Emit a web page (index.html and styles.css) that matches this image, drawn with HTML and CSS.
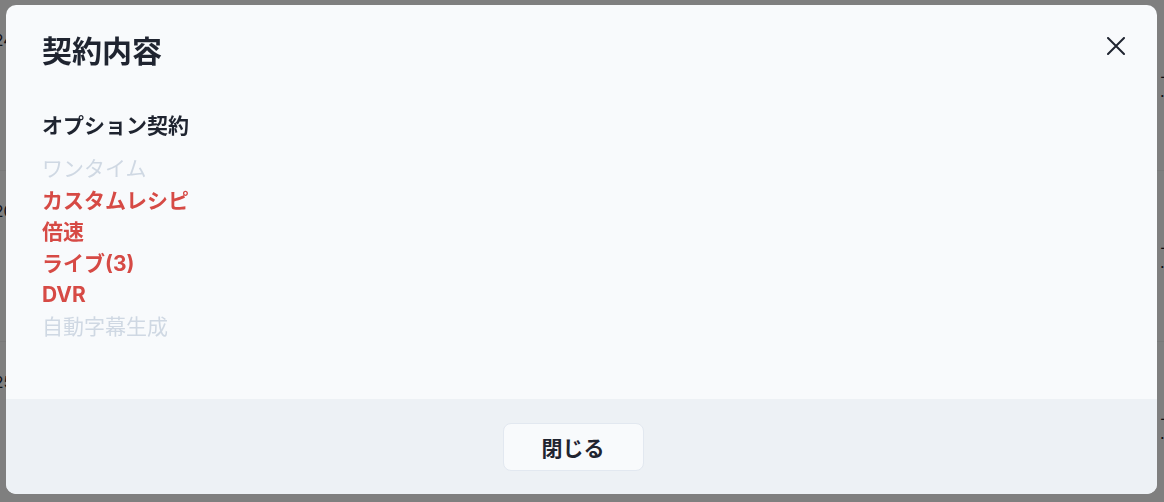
FILE: index.html
```html
<!DOCTYPE html>
<html lang="ja">
<head>
    <meta charset="UTF-8">
    <meta name="viewport" content="width=device-width, initial-scale=1.0">
    <title>契約内容</title>
    <link rel="stylesheet" href="styles.css">
</head>
<body>

    <!-- 背後の一覧 -->
    <div class="page" aria-hidden="true">
        <div class="row">
            <div class="cell-left"><span>2024</span><span>1.5</span></div>
            <div class="cell-right"><span>-</span><span>·</span></div>
        </div>
        <div class="row">
            <div class="cell-left"><span>2020</span><span>1.5</span></div>
            <div class="cell-right"><span>-</span><span>·</span></div>
        </div>
        <div class="row">
            <div class="cell-left"><span>2025</span><span>1.5</span><span>-:</span></div>
            <div class="cell-right"><span>-</span><span>·</span></div>
        </div>
    </div>

    <div class="overlay">
        <div class="modal">
            <div class="modal-body">
                <h2 class="modal-title">契約内容</h2>
                <button class="close-btn" aria-label="閉じる">
                    <svg width="18" height="18" viewBox="0 0 18 18">
                        <path d="M1 1 L17 17 M17 1 L1 17" stroke="#1f2430" stroke-width="2" stroke-linecap="round" fill="none"/>
                    </svg>
                </button>

                <h3 class="section-title">オプション契約</h3>
                <ul class="options">
                    <li class="off">ワンタイム</li>
                    <li class="on">カスタムレシピ</li>
                    <li class="on">倍速</li>
                    <li class="on">ライブ(3)</li>
                    <li class="on">DVR</li>
                    <li class="off">自動字幕生成</li>
                </ul>
            </div>
            <div class="modal-footer">
                <button class="footer-btn">閉じる</button>
            </div>
        </div>
    </div>

</body>
</html>
```

FILE: styles.css
```css
body {
    margin: 0;
    font-family: Inter, "Noto Sans CJK JP", sans-serif;
    background: #fff;
    color: #1f2430;
    overflow: hidden;
}
.page {
    height: 502px;
}
.row {
    display: flex;
    justify-content: space-between;
    height: 170px;
    border-bottom: 1px solid #f2f2f2;
}
.cell-left, .cell-right {
    display: flex;
    flex-direction: column;
    gap: 14px;
    padding-top: 30px;
    font-size: 16px;
    color: #1f2430;
}
.cell-left {
    margin-left: -26px;
}
.cell-right {
    margin-right: -6px;
    width: 10px;
    padding-top: 66px;
    gap: 0;
}
.overlay {
    position: fixed;
    inset: 0;
    background: rgba(0, 0, 0, 0.5);
    padding: 5px 7px 8px 6px;
}
.modal {
    height: 100%;
    display: flex;
    flex-direction: column;
    background: #f8fafc;
    border-radius: 10px;
    overflow: hidden;
}
.modal-body {
    flex: 1;
    position: relative;
    padding: 26px 36px 0;
}
.modal-title {
    margin: 0;
    font-size: 30px;
    font-weight: 700;
    line-height: 40px;
    color: #1f2430;
}
.close-btn {
    position: absolute;
    top: 23px;
    right: 23px;
    width: 36px;
    height: 36px;
    padding: 0;
    border: none;
    background: none;
    display: flex;
    align-items: center;
    justify-content: center;
    cursor: pointer;
}
.section-title {
    margin: 41px 0 13px;
    font-size: 21px;
    font-weight: 700;
    line-height: 28px;
    color: #1f2430;
}
.options {
    list-style: none;
    margin: 0;
    padding: 0;
    font-size: 21px;
    line-height: 31.6px;
}
.options .off {
    color: #cfd8e3;
}
.options .on {
    color: #d64a45;
    font-weight: 700;
}
.modal-footer {
    height: 95px;
    background: #edf1f5;
    display: flex;
    align-items: center;
    justify-content: center;
    padding-right: 17px;
}
.footer-btn {
    width: 141px;
    height: 48px;
    background: #f8fafc;
    border: 1px solid #e2e8f0;
    border-radius: 8px;
    font-family: Inter, "Noto Sans CJK JP", sans-serif;
    font-size: 21px;
    font-weight: 700;
    color: #1f2430;
    cursor: pointer;
}
```
